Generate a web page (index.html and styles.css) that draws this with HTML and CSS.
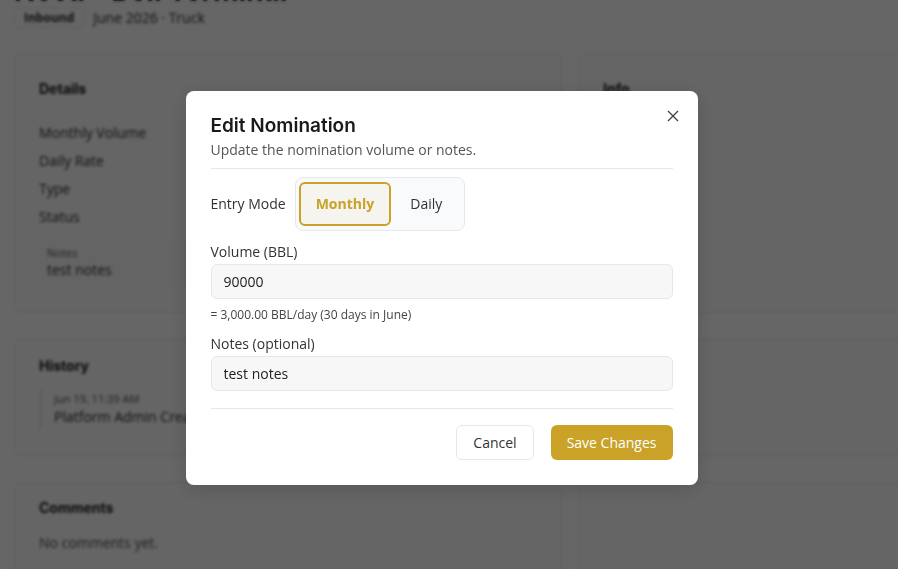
FILE: index.html
```html
<!DOCTYPE html>
<html lang="en">
<head>
    <meta charset="UTF-8">
    <meta name="viewport" content="width=device-width, initial-scale=1.0">
    <title>Edit Nomination</title>
    <link rel="stylesheet" href="styles.css">
</head>
<body>
    <div class="page">
        <h1 class="page-title">Nova - Bell Terminal</h1>
        <div class="page-meta">
            <span class="badge">Inbound</span>
            <span>June 2026 · Truck</span>
        </div>

        <div class="grid">
            <div class="card card-top">
                <h3>Details</h3>
                <div class="rows">
                    <div>Monthly Volume</div>
                    <div>Daily Rate</div>
                    <div>Type</div>
                    <div>Status</div>
                </div>
                <div class="notes-box">
                    <div class="small">Notes</div>
                    <div>test notes</div>
                </div>
            </div>
            <div class="card card-top">
                <h3>Info</h3>
            </div>

            <div class="card card-mid">
                <h3>History</h3>
                <div class="timeline">
                    <div class="small">Jun 19, 11:39 AM</div>
                    <div>Platform Admin Created nomination</div>
                </div>
            </div>
            <div class="card card-mid"></div>

            <div class="card card-low">
                <h3>Comments</h3>
                <p class="muted">No comments yet.</p>
            </div>
            <div class="card card-low"></div>
        </div>
    </div>

    <div class="overlay">
        <div class="modal">
            <button type="button" class="close-btn" aria-label="Close">
                <svg width="12" height="12" viewBox="0 0 12 12"><path d="M1 1L11 11M11 1L1 11" stroke="#444" stroke-width="1.4" fill="none"/></svg>
            </button>
            <h2>Edit Nomination</h2>
            <p class="subtitle">Update the nomination volume or notes.</p>
            <hr>
            <div class="mode-row">
                <span>Entry Mode</span>
                <div class="segmented">
                    <button type="button" class="seg active">Monthly</button>
                    <button type="button" class="seg">Daily</button>
                </div>
            </div>
            <div class="form-group">
                <label for="volume">Volume (BBL)</label>
                <input type="text" id="volume" value="90000">
                <div class="hint">= 3,000.00 BBL/day (30 days in June)</div>
            </div>
            <div class="form-group">
                <label for="notes">Notes (optional)</label>
                <input type="text" id="notes" value="test notes">
            </div>
            <hr class="bottom-rule">
            <div class="actions">
                <button type="button" class="btn-cancel">Cancel</button>
                <button type="button" class="btn-save">Save Changes</button>
            </div>
        </div>
    </div>
</body>
</html>
```

FILE: styles.css
```css
html, body {
    margin: 0;
    overflow: hidden;
    height: 100%;
}
body {
    font-family: "Open Sans", "Liberation Sans", sans-serif;
    font-size: 14px;
    color: #333;
    background: #fff;
}
.page {
    width: 1100px;
    padding: 0 14px;
}
.page-title {
    font-family: Inter, sans-serif;
    font-size: 28px;
    font-weight: 700;
    margin: -26px 0 0;
    line-height: 34px;
    color: #111;
}
.page-meta {
    display: flex;
    align-items: center;
    gap: 9px;
    margin-top: -1px;
}
.badge {
    font-size: 12px;
    font-weight: 700;
    line-height: 19px;
    border: 1px solid #e5e7eb;
    border-radius: 4px;
    padding: 0 9px;
    color: #333;
}
.grid {
    display: grid;
    grid-template-columns: 548px 500px;
    gap: 26px 16px;
    margin-top: 26px;
}
.card {
    border: 1px solid #e5e7eb;
    border-radius: 8px;
    padding: 25px 24px 24px;
    background: #fdfdfd;
}
.card-top {
    height: 208px;
}
.card-mid {
    padding-top: 17px;
    height: 74px;
}
.card-low {
    padding-top: 16px;
}
.card h3 {
    font-family: Inter, sans-serif;
    font-size: 14px;
    font-weight: 700;
    margin: 0 0 25px;
    line-height: 18px;
    color: #222;
}
.rows {
    margin-top: -4px;
}
.rows div {
    height: 28px;
    line-height: 28px;
}
.notes-box {
    margin-top: 7px;
    padding: 7px 8px;
    background: #f9fafb;
    border-radius: 6px;
}
.small {
    font-size: 11px;
    color: #555;
}
.timeline {
    margin-top: -13px;
    border-left: 2px solid #e5e7eb;
    padding: 3px 12px 4px;
    margin-left: 1px;
    white-space: nowrap;
    line-height: 18px;
}
.muted {
    margin: -9px 0 0;
    color: #555;
}

.overlay {
    position: fixed;
    inset: 0;
    background: rgba(0, 0, 0, 0.6);
    backdrop-filter: blur(1.5px);
    display: flex;
    align-items: center;
    justify-content: center;
    padding-right: 15px;
    padding-top: 6px;
}
.modal {
    position: relative;
    width: 512px;
    box-sizing: border-box;
    background: #fff;
    border-radius: 8px;
    padding: 23px 25px 25px;
    box-shadow: 0 4px 20px rgba(0, 0, 0, 0.15);
}
.close-btn {
    position: absolute;
    top: 15px;
    right: 15px;
    background: none;
    border: none;
    padding: 4px;
    cursor: pointer;
    display: flex;
}
.modal h2 {
    font-family: Inter, sans-serif;
    font-size: 19px;
    font-weight: 600;
    margin: 0;
    line-height: 24px;
    color: #1a1a1a;
}
.subtitle {
    margin: 2px 0 0;
    color: #555;
    line-height: 20px;
}
.modal hr {
    border: none;
    border-top: 1px solid #e2e8f0;
    margin: 8px 0 8px;
}
.mode-row {
    display: flex;
    align-items: center;
    gap: 9px;
}
.segmented {
    display: flex;
    padding: 4px 3px;
    border: 1px solid #e5e7eb;
    border-radius: 8px;
    background: #f9fafb;
}
.seg {
    font-family: "Open Sans", sans-serif;
    font-size: 14px;
    height: 44px;
    padding: 0 17px;
    background: none;
    border: 2px solid transparent;
    border-radius: 6px;
    color: #333;
    cursor: pointer;
}
.seg.active {
    padding: 0 15px;
    border-color: #c9a227;
    background: #f6f4ee;
    color: #c9a227;
    font-weight: 700;
}
.form-group {
    margin-top: 11px;
}
.form-group label {
    display: block;
    line-height: 20px;
    margin-bottom: 2px;
    color: #333;
}
.form-group input {
    width: 100%;
    box-sizing: border-box;
    height: 35px;
    padding: 0 12px;
    font-family: "Open Sans", sans-serif;
    font-size: 14px;
    color: #222;
    background: #f7f7f8;
    border: 1px solid #e5e7eb;
    border-radius: 6px;
}
.hint {
    font-size: 12px;
    color: #444;
    margin-top: 7px;
    line-height: 17px;
}
.modal hr.bottom-rule {
    margin: 17px 0 16px;
}
.actions {
    display: flex;
    justify-content: flex-end;
    gap: 17px;
}
.actions button {
    font-family: "Open Sans", sans-serif;
    font-size: 14px;
    height: 35px;
    padding: 0 16px;
    border-radius: 6px;
    cursor: pointer;
}
.btn-cancel {
    background: #fff;
    border: 1px solid #e2e8f0;
    color: #333;
}
.btn-save {
    background: #c9a227;
    border: none;
    color: #fff;
}
```
